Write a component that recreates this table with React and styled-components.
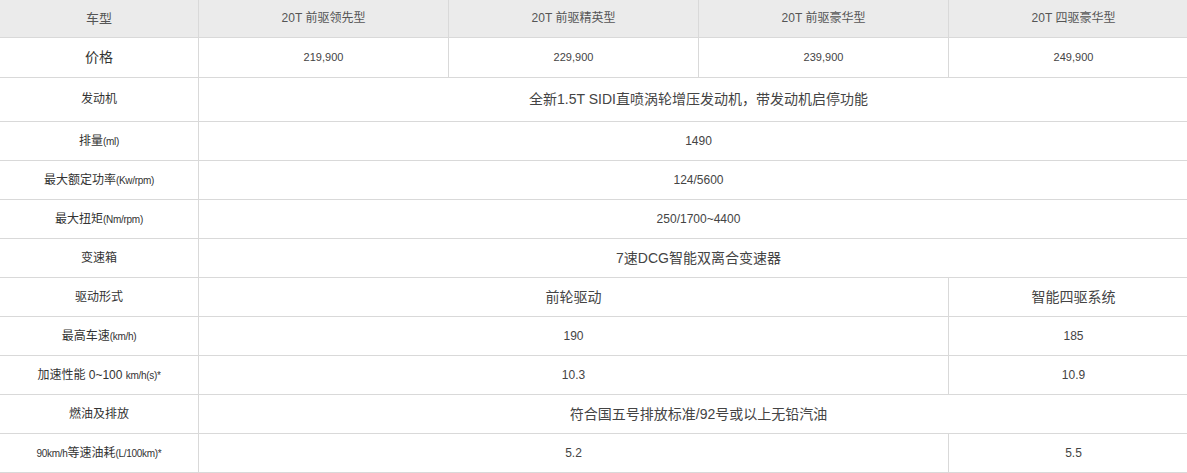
import React from 'react';
import styled, { createGlobalStyle } from 'styled-components';

const GlobalStyle = createGlobalStyle`
  * { box-sizing: border-box; }
  html, body {
    margin: 0;
    padding: 0;
    background: #fff;
    overflow: hidden;
  }
  body {
    font-family: "Liberation Sans", "Noto Sans CJK SC", sans-serif;
    color: #333;
  }
`;

const modelos = ['20T 前驱领先型', '20T 前驱精英型', '20T 前驱豪华型', '20T 四驱豪华型'];
const precos = ['219,900', '229,900', '239,900', '249,900'];

function App() {
  return (
    <Wrapper>
      <GlobalStyle />
      <Tabela>
        <colgroup>
          <col style={{ width: 199 }} />
          <col style={{ width: 250 }} />
          <col style={{ width: 250 }} />
          <col style={{ width: 250 }} />
          <col style={{ width: 250 }} />
        </colgroup>
        <tbody>
          <Linha $h={38}>
            <Cabecalho $size={13}>车型</Cabecalho>
            {modelos.map(m => (
              <Cabecalho key={m} $size={12}>{m}</Cabecalho>
            ))}
          </Linha>
          <Linha $h={40}>
            <Rotulo $size={14}>价格</Rotulo>
            {precos.map(p => (
              <Valor key={p} $size={11}>{p}</Valor>
            ))}
          </Linha>
          <Linha $h={44}>
            <Rotulo>发动机</Rotulo>
            <Valor colSpan={4} $size={14}>全新1.5T SIDI直喷涡轮增压发动机，带发动机启停功能</Valor>
          </Linha>
          <Linha>
            <Rotulo>排量<Unidade>(ml)</Unidade></Rotulo>
            <Valor colSpan={4}>1490</Valor>
          </Linha>
          <Linha>
            <Rotulo>最大额定功率<Unidade>(Kw/rpm)</Unidade></Rotulo>
            <Valor colSpan={4}>124/5600</Valor>
          </Linha>
          <Linha>
            <Rotulo>最大扭矩<Unidade>(Nm/rpm)</Unidade></Rotulo>
            <Valor colSpan={4}>250/1700~4400</Valor>
          </Linha>
          <Linha>
            <Rotulo>变速箱</Rotulo>
            <Valor colSpan={4} $size={14}>7速DCG智能双离合变速器</Valor>
          </Linha>
          <Linha>
            <Rotulo>驱动形式</Rotulo>
            <Valor colSpan={3} $size={14}>前轮驱动</Valor>
            <Valor $size={14}>智能四驱系统</Valor>
          </Linha>
          <Linha>
            <Rotulo>最高车速<Unidade>(km/h)</Unidade></Rotulo>
            <Valor colSpan={3}>190</Valor>
            <Valor>185</Valor>
          </Linha>
          <Linha>
            <Rotulo>加速性能 0~100 <Unidade>km/h(s)*</Unidade></Rotulo>
            <Valor colSpan={3}>10.3</Valor>
            <Valor>10.9</Valor>
          </Linha>
          <Linha>
            <Rotulo>燃油及排放</Rotulo>
            <Valor colSpan={4} $size={14}>符合国五号排放标准/92号或以上无铅汽油</Valor>
          </Linha>
          <Linha>
            <Rotulo><Unidade>90km/h</Unidade>等速油耗<Unidade>(L/100km)*</Unidade></Rotulo>
            <Valor colSpan={3}>5.2</Valor>
            <Valor>5.5</Valor>
          </Linha>
        </tbody>
      </Tabela>
    </Wrapper>
  );
}

const Wrapper = styled.div`
  width: 1187px;
  overflow: hidden;
`;

const Tabela = styled.table`
  width: 1199px;
  table-layout: fixed;
  border-collapse: separate;
  border-spacing: 0;
`;

const Linha = styled.tr`
  height: ${p => p.$h || 39}px;
`;

const Celula = styled.td`
  padding: 0 6px;
  text-align: center;
  vertical-align: middle;
  border-right: 1px solid #d9d9d9;
  border-bottom: 1px solid #d9d9d9;
  white-space: nowrap;
  line-height: 1.2;
`;

const Cabecalho = styled(Celula).attrs({ as: 'th' })`
  background: #ebebeb;
  color: #555;
  font-weight: normal;
  font-size: ${p => p.$size || 12}px;
`;

const Rotulo = styled(Celula)`
  color: #333;
  font-size: ${p => p.$size || 12}px;
`;

const Valor = styled(Celula)`
  color: #444;
  font-size: ${p => p.$size || 12}px;
`;

const Unidade = styled.span`
  font-size: 10px;
  letter-spacing: -0.3px;
`;

export default App;
